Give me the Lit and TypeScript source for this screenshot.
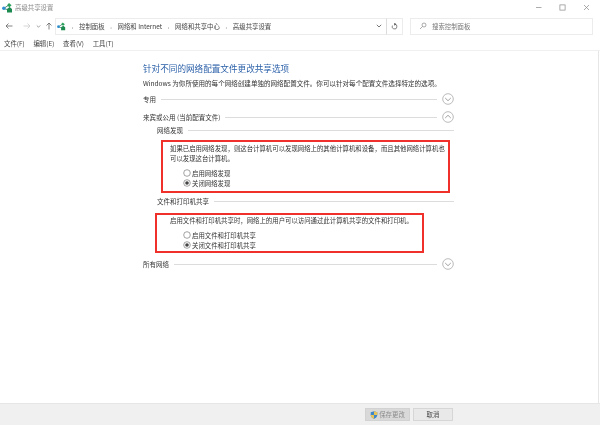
import { LitElement, html, css, svg } from "lit";
import { customElement } from "lit/decorators.js";

const logo = svg`<path d="M1.5 5.5 L7 2 M1.5 5.5 L7 7" stroke="#4f8f7a" stroke-width="1" fill="none"/><circle cx="1.8" cy="5.2" r="1.7" fill="#2f8fd0"/><path d="M5 2.2 L7 0 L9.6 2.2 L7.4 4.2Z" fill="#2aa05a"/><path d="M5 6 L7.6 4 L10 6 V9.6 H5Z" fill="#1d8a50"/>`;

const chevron = (up: boolean) => html`<svg class="chev" width="12" height="12" viewBox="0 0 12 12">
  <circle cx="6" cy="6" r="5.3" fill="#fff" stroke="#a9a9a9" stroke-width="0.8"/>
  <path d=${up ? "M3.2 7 L6 4.3 L8.8 7" : "M3.2 5 L6 7.7 L8.8 5"} fill="none" stroke="#8a8a8a" stroke-width="0.8"/>
</svg>`;

const radio = (on: boolean) => html`<svg class="radio" width="8" height="8" viewBox="0 0 8 8">
  <circle cx="4" cy="4" r="3.3" fill="#fff" stroke="#666" stroke-width="0.6"/>
  ${on ? svg`<circle cx="4" cy="4" r="1.8" fill="#444"/>` : ""}
</svg>`;

@customElement("app-root")
export class AppRoot extends LitElement {
  static styles = css`
    :host {
      display: flex;
      flex-direction: column;
      width: 600px;
      height: 425px;
      background: #fff;
      font-family: "Noto Sans CJK SC", "Liberation Sans", sans-serif;
      color: #333;
      font-size: 6.4px;
      overflow: hidden;
      filter: blur(0.25px);
    }
    .title {
      height: 15px;
      display: flex;
      align-items: center;
      padding: 0 0 0 2px;
      gap: 2px;
      color: #8a8a8a;
      flex: none;
    }
    .winbtns { margin-left: auto; display: flex; align-items: center; gap: 17px; padding-right: 10px; }
    .nav {
      height: 22px;
      flex: none;
      display: flex;
      align-items: center;
      padding: 0 8px 0 5px;
    }
    .arrows { display: flex; align-items: center; gap: 3px; width: 50px; flex: none; }
    .addr {
      width: 332px;
      height: 17px;
      box-sizing: border-box;
      border: 1px solid #ececec;
      display: flex;
      align-items: center;
      flex: none;
      padding-left: 1px;
      color: #444;
    }
    .crumb { display: flex; align-items: center; gap: 5.75px; }
    .sep { color: #777; font-size: 5px; }
    .addr .caret { margin-left: auto; padding-right: 4px; display: flex; }
    .refresh {
      width: 17px;
      height: 17px;
      box-sizing: border-box;
      border: 1px solid #ececec;
      border-left: 1px solid #dcdcdc;
      margin-left: -1px;
      display: flex;
      align-items: center;
      justify-content: center;
      flex: none;
    }
    .search {
      margin-left: 7px;
      width: 183px;
      height: 17px;
      box-sizing: border-box;
      border: 1px solid #ececec;
      display: flex;
      align-items: center;
      gap: 5px;
      padding-left: 8px;
      color: #777;
      flex: none;
    }
    .menu {
      height: 14px;
      flex: none;
      display: flex;
      align-items: center;
      gap: 8.8px;
      padding-left: 4px;
      padding-bottom: 1px;
      box-sizing: border-box;
      border-bottom: 1px solid #f0f0f0;
      color: #444;
    }
    .main { flex: 1; min-height: 0; display: flex; flex-direction: column; padding: 11px 144px 0 143px; border-right: 1px solid #e6e6e6; margin-right: 1px; }
    h1 {
      margin: 0;
      font-weight: 400;
      font-size: 8.6px;
      line-height: 12px;
      color: #2a5fa8;
      white-space: nowrap;
    }
    .desc { margin-top: 4px; line-height: 10px; white-space: nowrap; font-size: 6.55px; }
    .sec { display: flex; align-items: center; gap: 5px; height: 12px; white-space: nowrap; font-size: 6.5px; }
    .sec .rule { flex: 1; height: 1px; background: #dcdcdc; }
    .sec.first { margin-top: 5px; }
    .sec.next { margin-top: 6px; }
    .sec.last { margin-top: 5px; }
    .sub { margin-left: 14px; height: 10px; margin-top: 2px; }
    .sub.after { margin-top: 3px; }
    .red {
      box-sizing: border-box;
      border: 2px solid #f0302a;
      white-space: nowrap;
      color: #333;
    }
    .red1 { margin: 5px 4px 0 18px; height: 53px; padding: 2px 0 0 7px; font-size: 6.4px; }
    .red2 { margin: 7px 30px 0 12px; height: 40px; padding: 1px 0 0 13px; }
    .red p { margin: 0; line-height: 10px; }
    .opts { margin: 4px 0 0 13px; font-size: 6.4px; }
    .red2 .opts { margin-top: 4px; }
    .opt { display: flex; align-items: center; gap: 1px; height: 10px; }
    .radio, .chev { flex: none; }
    .foot {
      height: 22px;
      flex: none;
      background: #f0f0f0;
      border-top: 1px solid #e6e6e6;
      box-sizing: border-box;
      display: flex;
      justify-content: flex-end;
      align-items: center;
      gap: 3px;
      padding-right: 147px;
    }
    .btn {
      height: 13px;
      box-sizing: border-box;
      border: 1px solid #d6d6d6;
      background: #e9e9e9;
      display: flex;
      align-items: center;
      justify-content: center;
      gap: 1px;
      color: #444;
    }
    .save { width: 45px; background: #d9d9d9; color: #8e8e8e; border-color: #d2d2d2; }
    .cancel { width: 40px; }
  `;

  render() {
    return html`
      <div class="title">
        <svg width="11" height="10" viewBox="0 0 11 10">${logo}</svg>
        <span>高级共享设置</span>
        <div class="winbtns">
          <svg width="7" height="7" viewBox="0 0 7 7"><path d="M1 3.5H6.5" stroke="#888" stroke-width="0.7"/></svg>
          <svg width="7" height="7" viewBox="0 0 7 7"><rect x="0.9" y="0.9" width="5.2" height="5.2" fill="none" stroke="#888" stroke-width="0.7"/></svg>
          <svg width="7" height="7" viewBox="0 0 7 7"><path d="M1 1L6 6M6 1L1 6" stroke="#888" stroke-width="0.7"/></svg>
        </div>
      </div>
      <div class="nav">
        <div class="arrows">
          <svg width="8" height="8" viewBox="0 0 8 8"><path d="M7.5 4H1M3.5 1.5L1 4L3.5 6.5" fill="none" stroke="#666" stroke-width="0.8"/></svg>
          <svg style="margin-left:7px" width="8" height="8" viewBox="0 0 8 8"><path d="M0.5 4H7M4.5 1.5L7 4L4.5 6.5" fill="none" stroke="#ccc" stroke-width="0.8"/></svg>
          <svg style="margin-left:2px" width="5" height="5" viewBox="0 0 5 5"><path d="M0.8 1.5L2.5 3.2L4.2 1.5" fill="none" stroke="#777" stroke-width="0.7"/></svg>
          <svg style="margin-left:1px" width="8" height="8" viewBox="0 0 8 8"><path d="M4 7.5V1M1.5 3.5L4 1L6.5 3.5" fill="none" stroke="#666" stroke-width="0.8"/></svg>
        </div>
        <div class="addr">
          <div class="crumb">
            <svg width="9" height="9" viewBox="0 0 11 10">${logo}</svg>
            <span class="sep">›</span><span>控制面板</span>
            <span class="sep">›</span><span>网络和 Internet</span>
            <span class="sep">›</span><span>网络和共享中心</span>
            <span class="sep">›</span><span>高级共享设置</span>
          </div>
          <span class="caret"><svg width="6" height="6" viewBox="0 0 6 6"><path d="M0.8 1.8L3 4L5.2 1.8" fill="none" stroke="#555" stroke-width="0.8"/></svg></span>
        </div>
        <div class="refresh"><svg width="7" height="7" viewBox="0 0 7 7"><path d="M3.5 1.2A2.4 2.4 0 1 1 1.4 2.5M3.5 0.2V2.2L5 1.2Z" fill="none" stroke="#555" stroke-width="0.7"/></svg></div>
        <div class="search">
          <svg width="8" height="8" viewBox="0 0 8 8"><circle cx="5" cy="3" r="2" fill="none" stroke="#888" stroke-width="0.7"/><path d="M3.5 4.5L1 7" stroke="#888" stroke-width="0.7"/></svg>
          <span>搜索控制面板</span>
        </div>
      </div>
      <div class="menu">
        <span>文件(F)</span><span>编辑(E)</span><span>查看(V)</span><span>工具(T)</span>
      </div>
      <div class="main">
        <h1>针对不同的网络配置文件更改共享选项</h1>
        <div class="desc">Windows 为你所使用的每个网络创建单独的网络配置文件。你可以针对每个配置文件选择特定的选项。</div>
        <div class="sec first"><span>专用</span><span class="rule"></span>${chevron(false)}</div>
        <div class="sec next"><span>来宾或公用 (当前配置文件)</span><span class="rule"></span>${chevron(true)}</div>
        <div class="sec sub"><span>网络发现</span><span class="rule"></span></div>
        <div class="red red1">
          <p>如果已启用网络发现，则这台计算机可以发现网络上的其他计算机和设备，而且其他网络计算机也<br />可以发现这台计算机。</p>
          <div class="opts">
            <div class="opt">${radio(false)}<span>启用网络发现</span></div>
            <div class="opt">${radio(true)}<span>关闭网络发现</span></div>
          </div>
        </div>
        <div class="sec sub after"><span>文件和打印机共享</span><span class="rule"></span></div>
        <div class="red red2">
          <p>启用文件和打印机共享时，网络上的用户可以访问通过此计算机共享的文件和打印机。</p>
          <div class="opts">
            <div class="opt">${radio(false)}<span>启用文件和打印机共享</span></div>
            <div class="opt">${radio(true)}<span>关闭文件和打印机共享</span></div>
          </div>
        </div>
        <div class="sec last"><span>所有网络</span><span class="rule"></span>${chevron(false)}</div>
      </div>
      <div class="foot">
        <div class="btn save">
          <svg width="8" height="8" viewBox="0 0 8 8"><path d="M4 0.3L7.3 1.3V4C7.3 6 5.5 7.3 4 7.8C2.5 7.3 0.7 6 0.7 4V1.3Z" fill="#3d86c9"/><path d="M4 0.3L7.3 1.3V4H4ZM4 4V7.8C2.5 7.3 0.7 6 0.7 4Z" fill="#e8c35a"/></svg>
          <span>保存更改</span>
        </div>
        <div class="btn cancel"><span>取消</span></div>
      </div>
    `;
  }
}
